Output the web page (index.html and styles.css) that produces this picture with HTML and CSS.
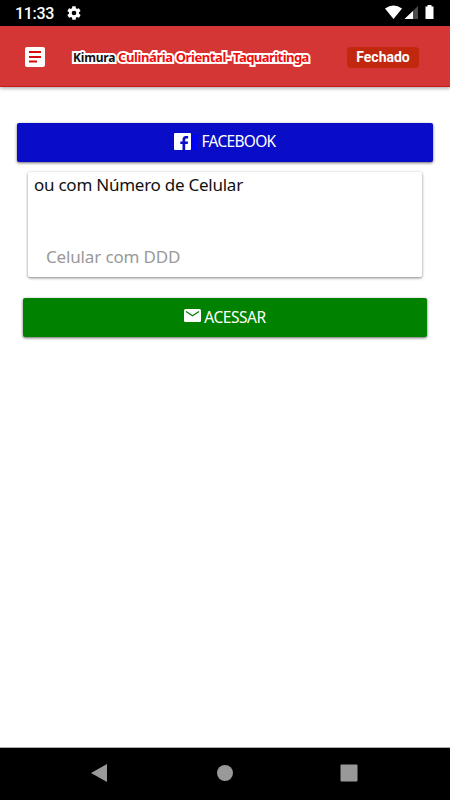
FILE: index.html
```html
<!DOCTYPE html>
<html lang="pt-BR">
<head>
    <meta charset="UTF-8">
    <meta name="viewport" content="width=device-width, initial-scale=1.0">
    <title>Kimura Culinária Oriental</title>
    <link rel="stylesheet" href="styles.css">
</head>
<body>
    <div class="status-bar">
        <span class="clock">11:33</span>
        <svg class="gear" width="16" height="16" viewBox="0 0 24 24"><path fill="#fff" d="M19.4 13c0-.3.1-.6.1-1s0-.7-.1-1l2.1-1.7c.2-.1.3-.4.1-.6l-2-3.500c-.1-.2-.4-.3-.6-.2l-2.500 1c-.5-.4-1.100-.7-1.700-1l-.4-2.600c0-.2-.2-.4-.5-.4h-4c-.2 0-.5.2-.5.4l-.4 2.600c-.6.3-1.200.6-1.700 1L4.900 5c-.2-.1-.5 0-.6.2l-2 3.500c-.1.2-.1.5.1.6L4.500 11c0 .3-.1.600-.1 1s0 .7.1 1l-2.100 1.700c-.2.1-.3.4-.1.6l2 3.500c.1.2.4.3.6.2l2.500-1c.5.4 1.100.7 1.700 1l.4 2.600c0 .2.2.4.5.4h4c.2 0 .5-.2.5-.4l.4-2.600c.6-.3 1.200-.6 1.700-1l2.500 1c.2.1.5 0 .6-.2l2-3.500c.1-.2.1-.5-.1-.6L19.400 13zM12 15.500a3.500 3.500 0 1 1 0-7 3.500 3.500 0 0 1 0 7z"/></svg>
        <svg class="signals" width="50" height="16" viewBox="0 0 50 16">
            <path fill="#fff" d="M0 3.500Q8.500-2.500 17 3.500L8.500 14z"/>
            <path fill="#4c4c4c" d="M33 1v13H19.500z"/>
            <path fill="#fff" d="M28 6v8h-8.500z"/>
            <path fill="#fff" d="M40.500 1.500h2V0h4v1.500h2V14h-8z"/>
        </svg>
    </div>

    <header class="toolbar">
        <svg class="menu" width="20" height="20" viewBox="0 0 20 20">
            <rect width="20" height="20" rx="2" fill="#fff"/>
            <path fill="#d40d0d" d="M4 4h12v2H4zM4 9h12v2H4zM4 13.500h8v2H4z"/>
        </svg>
        <h1 class="title"><span class="brand">Kimura</span><span class="kitchen">Culinária Oriental-</span><span class="city">Taquaritinga</span></h1>
        <span class="badge">Fechado</span>
    </header>

    <main class="content">
        <button class="btn facebook">
            <svg width="23" height="18" viewBox="0 0 23 18">
                <path fill="#0000f5" d="M17 2h6v15h-6z"/>
                <rect width="17" height="17" rx="1" fill="#fff"/>
                <path fill="#0a0dca" d="M8.500 17v-6H6.300V8.500h2.200V6.700c0-2.300 1.300-3.700 3.300-3.700h2.300v2.500h-1.500c-1 0-1.400.5-1.400 1.300v1.700h2.900l-.4 2.500h-2.500v6z"/>
            </svg>
            <span>FACEBOOK</span>
        </button>

        <form class="card">
            <label for="phone">ou com Número de Celular</label>
            <input type="tel" id="phone" placeholder="Celular com DDD">
        </form>

        <button class="btn access">
            <svg width="17" height="14" viewBox="0 0 17 14">
                <rect width="17" height="13" rx="1.500" fill="#fff"/>
                <path d="M2 2.500l6.500 4.300L15 2.500" fill="none" stroke="#008200" stroke-width="1.300"/>
            </svg>
            <span>ACESSAR</span>
        </button>
    </main>

    <nav class="nav-bar">
        <svg width="18" height="18" viewBox="0 0 18 18"><path fill="#999" d="M16 0v18L0 9z"/></svg>
        <svg width="18" height="18" viewBox="0 0 18 18"><circle cx="9" cy="9" r="8" fill="#999"/></svg>
        <svg width="18" height="18" viewBox="0 0 18 18"><rect x=".5" y=".5" width="17" height="17" rx="1" fill="#999"/></svg>
    </nav>
</body>
</html>
```
FILE: styles.css
```css
/* General Styles */
* {
    box-sizing: border-box;
}

body {
    font-family: "Noto Sans", sans-serif;
    margin: 0;
    height: 800px;
    display: flex;
    flex-direction: column;
    background-color: #fff;
    overflow: hidden;
}

svg {
    display: block;
    flex-shrink: 0;
}

/* Android status bar */
.status-bar {
    height: 26px;
    padding: 0 15px;
    display: flex;
    align-items: center;
    background-color: #000;
    color: #fff;
}

.clock {
    width: 51px;
    font: 500 16px/26px Roboto, sans-serif;
    letter-spacing: -0.3px;
    padding-top: 1px;
}

.signals {
    margin-left: auto;
}

/* Toolbar */
.toolbar {
    height: 61px;
    padding: 0 31px 0 25px;
    display: flex;
    align-items: center;
    background-color: #d43535;
    border-bottom: 1px solid #c91c18;
    box-shadow: 0 1px 4px rgba(0, 0, 0, 0.4);
}

.menu {
    margin-top: 2px;
}

.title {
    margin: 3px 0 0 28px;
    display: flex;
    align-items: baseline;
    font-size: 13px;
    line-height: 20px;
    font-weight: bold;
    white-space: nowrap;
    color: #f00c0c;
    -webkit-text-stroke: 4px #fff;
    paint-order: stroke fill;
}

.brand {
    width: 45px;
    font-size: 12px;
    color: #111;
    letter-spacing: -0.2px;
}

.kitchen {
    width: 115px;
    letter-spacing: -0.4px;
}

.city {
    letter-spacing: -0.55px;
}

.badge {
    width: 72px;
    height: 21px;
    margin: 2px 0 0 auto;
    border-radius: 4px;
    background-color: #c1280d;
    color: #fff;
    font: bold 14px/20px Roboto, sans-serif;
    text-align: center;
}

/* Login area */
.content {
    flex: 1;
    padding: 36px 17px 0;
}

.btn {
    display: flex;
    justify-content: center;
    align-items: center;
    height: 39px;
    padding: 0 0 3px;
    border: none;
    border-radius: 2px;
    box-shadow: 0 1px 3px rgba(0, 0, 0, 0.6);
    color: #fff;
    font-family: inherit;
    font-size: 15.5px;
}

.facebook {
    width: 416px;
    gap: 4px;
    padding-bottom: 2px;
    background-color: #0a0dc8;
}

.facebook span {
    margin-top: -1px;
    letter-spacing: -0.7px;
}

.access {
    width: 404px;
    margin-left: 6px;
    gap: 3px;
    background-color: #008200;
}

.access span {
    margin-top: 1px;
    letter-spacing: -0.45px;
}

/* Phone card */
.card {
    width: 394px;
    height: 105px;
    margin: 10px 0 21px 11px;
    padding: 0 6px;
    border-radius: 2px;
    box-shadow: 0 1px 3px rgba(0, 0, 0, 0.5);
}

.card label {
    display: block;
    height: 69px;
    font-size: 17px;
    line-height: 26px;
    letter-spacing: -0.25px;
    color: #111;
}

.card input {
    display: block;
    width: 100%;
    height: 31px;
    padding: 0 12px;
    border: none;
    background: none;
    font-family: inherit;
    font-size: 17px;
    letter-spacing: -0.15px;
}

.card input::placeholder {
    color: #999;
}

/* Android navigation bar */
.nav-bar {
    height: 53px;
    padding: 0 92px 2px 91px;
    display: flex;
    justify-content: space-between;
    align-items: center;
    background-color: #000;
    border-top: 1px solid #aaa;
}
```
